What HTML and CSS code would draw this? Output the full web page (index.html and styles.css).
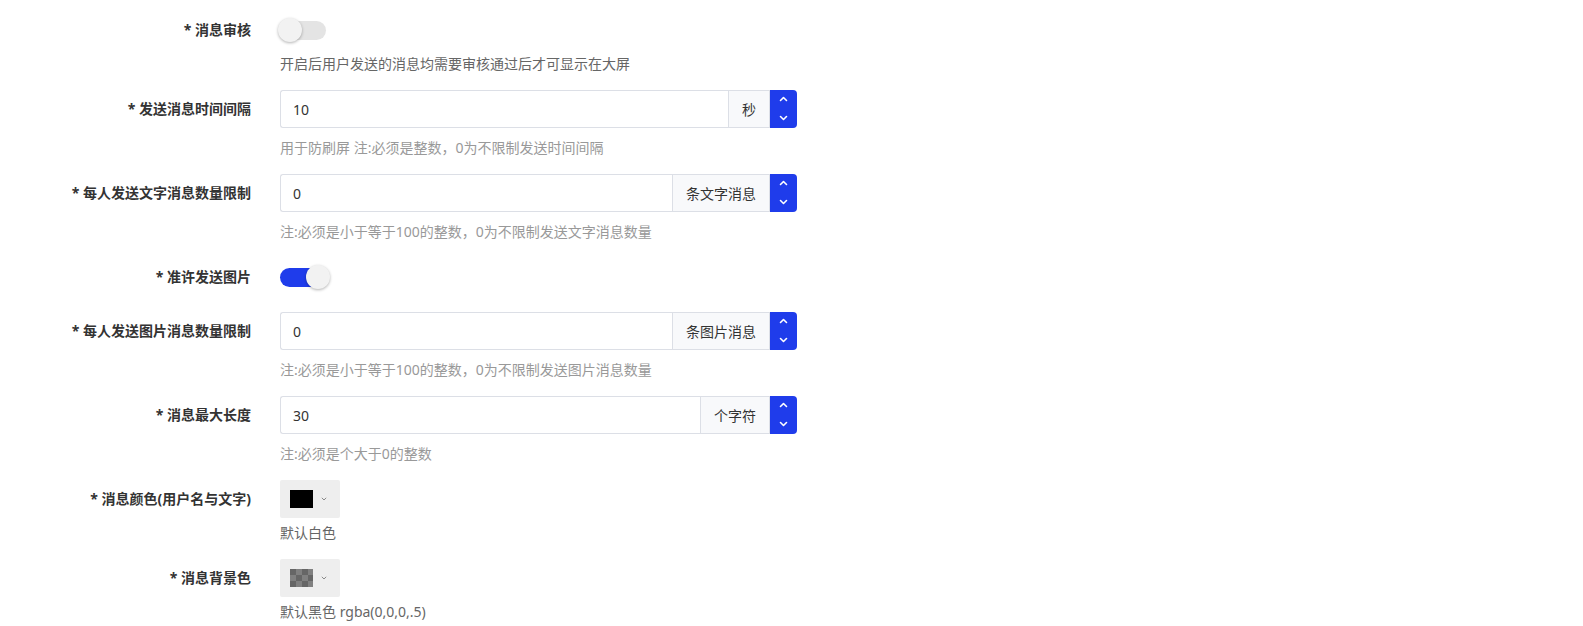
FILE: index.html
```html
<!DOCTYPE html>
<html lang="zh-CN">
<head>
    <meta charset="UTF-8">
    <meta name="viewport" content="width=device-width, initial-scale=1.0">
    <title>消息设置</title>
    <link rel="stylesheet" href="styles.css">
</head>
<body>

    <form class="settings-form">
        <!-- 消息审核 -->
        <div class="form-item">
            <label class="form-label">* 消息审核</label>
            <div class="form-control">
                <div class="control-line">
                    <span class="switch"></span>
                </div>
                <div class="form-tip">开启后用户发送的消息均需要审核通过后才可显示在大屏</div>
            </div>
        </div>

        <div class="form-item">
            <label class="form-label">* 发送消息时间间隔</label>
            <div class="form-control">
                <div class="control-line">
                    <div class="input-group">
                        <input class="input" type="text" value="10">
                        <span class="addon">秒</span>
                        <button class="spinner" type="button">
                            <svg width="27" height="38" viewBox="0 0 27 38"><path d="M10.5 10.5l3-3 3 3M10.5 26.5l3 3 3-3" fill="none" stroke="#fff" stroke-width="1.6" stroke-linecap="round" stroke-linejoin="round"/></svg>
                        </button>
                    </div>
                </div>
                <div class="form-desc">用于防刷屏 注:必须是整数，0为不限制发送时间间隔</div>
            </div>
        </div>

        <div class="form-item">
            <label class="form-label">* 每人发送文字消息数量限制</label>
            <div class="form-control">
                <div class="control-line">
                    <div class="input-group">
                        <input class="input" type="text" value="0">
                        <span class="addon">条文字消息</span>
                        <button class="spinner" type="button">
                            <svg width="27" height="38" viewBox="0 0 27 38"><path d="M10.5 10.5l3-3 3 3M10.5 26.5l3 3 3-3" fill="none" stroke="#fff" stroke-width="1.6" stroke-linecap="round" stroke-linejoin="round"/></svg>
                        </button>
                    </div>
                </div>
                <div class="form-desc">注:必须是小于等于100的整数，0为不限制发送文字消息数量</div>
            </div>
        </div>

        <div class="form-item">
            <label class="form-label">* 准许发送图片</label>
            <div class="form-control">
                <div class="control-line">
                    <span class="switch is-on"></span>
                </div>
            </div>
        </div>

        <div class="form-item">
            <label class="form-label">* 每人发送图片消息数量限制</label>
            <div class="form-control">
                <div class="control-line">
                    <div class="input-group">
                        <input class="input" type="text" value="0">
                        <span class="addon">条图片消息</span>
                        <button class="spinner" type="button">
                            <svg width="27" height="38" viewBox="0 0 27 38"><path d="M10.5 10.5l3-3 3 3M10.5 26.5l3 3 3-3" fill="none" stroke="#fff" stroke-width="1.6" stroke-linecap="round" stroke-linejoin="round"/></svg>
                        </button>
                    </div>
                </div>
                <div class="form-desc">注:必须是小于等于100的整数，0为不限制发送图片消息数量</div>
            </div>
        </div>

        <div class="form-item">
            <label class="form-label">* 消息最大长度</label>
            <div class="form-control">
                <div class="control-line">
                    <div class="input-group">
                        <input class="input" type="text" value="30">
                        <span class="addon">个字符</span>
                        <button class="spinner" type="button">
                            <svg width="27" height="38" viewBox="0 0 27 38"><path d="M10.5 10.5l3-3 3 3M10.5 26.5l3 3 3-3" fill="none" stroke="#fff" stroke-width="1.6" stroke-linecap="round" stroke-linejoin="round"/></svg>
                        </button>
                    </div>
                </div>
                <div class="form-desc">注:必须是个大于0的整数</div>
            </div>
        </div>

        <!-- 颜色选择 -->
        <div class="form-item">
            <label class="form-label">* 消息颜色(用户名与文字)</label>
            <div class="form-control">
                <div class="control-line">
                    <div class="color-picker">
                        <span class="swatch swatch-black"></span>
                        <svg class="caret" width="6" height="4" viewBox="0 0 6 4"><path d="M.8.8L3 3 5.2.8" fill="none" stroke="#8a8a8a" stroke-width="1"/></svg>
                    </div>
                </div>
                <div class="form-tip">默认白色</div>
            </div>
        </div>

        <div class="form-item">
            <label class="form-label">* 消息背景色</label>
            <div class="form-control">
                <div class="control-line">
                    <div class="color-picker">
                        <span class="swatch swatch-alpha"></span>
                        <svg class="caret" width="6" height="4" viewBox="0 0 6 4"><path d="M.8.8L3 3 5.2.8" fill="none" stroke="#8a8a8a" stroke-width="1"/></svg>
                    </div>
                </div>
                <div class="form-tip">默认黑色 rgba(0,0,0,.5)</div>
            </div>
        </div>
    </form>

</body>
</html>
```

FILE: styles.css
```css
/* Grundlayout */
body {
    margin: 0;
    background-color: #fff;
    font-family: "Noto Sans", "Noto Sans CJK SC", sans-serif;
    font-size: 14px;
    color: #333;
}

.settings-form {
    padding-top: 11px;
}

.form-item {
    display: flex;
    margin-bottom: 16px;
}

.form-label {
    width: 280px;
    box-sizing: border-box;
    padding-right: 29px;
    text-align: right;
    font-weight: bold;
    line-height: 38px;
    color: #333;
    white-space: nowrap;
}

.form-control {
    display: flex;
    flex-direction: column;
}

.control-line {
    height: 38px;
    display: flex;
    align-items: center;
}

.form-tip {
    margin-top: 5px;
    line-height: 20px;
    color: #666;
}

.form-desc {
    margin-top: 10px;
    line-height: 20px;
    color: #999;
}

/* Schalter */
.switch {
    position: relative;
    display: block;
    width: 46px;
    height: 19px;
    border-radius: 10px;
    background-color: #e4e4e4;
}

.switch::after {
    content: "";
    position: absolute;
    top: -3px;
    left: -2px;
    width: 24px;
    height: 24px;
    border-radius: 50%;
    background-color: #f2f2f2;
    box-shadow: 0 1px 3px rgba(0, 0, 0, 0.3);
}

.switch.is-on {
    background-color: #1f3ceb;
}

.switch.is-on::after {
    left: 26px;
}

/* Zahlenfeld mit Einheit */
.input-group {
    display: flex;
    width: 517px;
    height: 38px;
}

.input {
    flex: 1;
    min-width: 0;
    box-sizing: border-box;
    height: 38px;
    margin: 0;
    padding: 0 12px;
    border: 1px solid #dcdfe6;
    border-right: none;
    border-radius: 3px 0 0 3px;
    font-family: inherit;
    font-size: 14px;
    color: #333;
    background-color: #fff;
    outline: none;
}

.addon {
    display: flex;
    align-items: center;
    box-sizing: border-box;
    padding: 0 13px;
    border: 1px solid #dcdfe6;
    background-color: #f8f9fb;
    color: #333;
    white-space: nowrap;
}

.spinner {
    width: 27px;
    height: 38px;
    padding: 0;
    border: none;
    border-radius: 0 4px 4px 0;
    background-color: #1f3ceb;
    display: flex;
}

/* Farbauswahl */
.color-picker {
    display: flex;
    align-items: center;
    box-sizing: border-box;
    width: 60px;
    height: 38px;
    padding-left: 10px;
    background-color: #eee;
    border-radius: 2px;
}

.swatch {
    width: 23px;
    height: 18px;
}

.swatch-black {
    background-color: #000;
}

.swatch-alpha {
    background-color: #666;
    background-image:
        linear-gradient(45deg, #808080 25%, transparent 25%, transparent 75%, #808080 75%),
        linear-gradient(45deg, #808080 25%, transparent 25%, transparent 75%, #808080 75%);
    background-size: 12px 12px;
    background-position: 0 0, 6px 6px;
}

.caret {
    margin-left: 8px;
}
```
